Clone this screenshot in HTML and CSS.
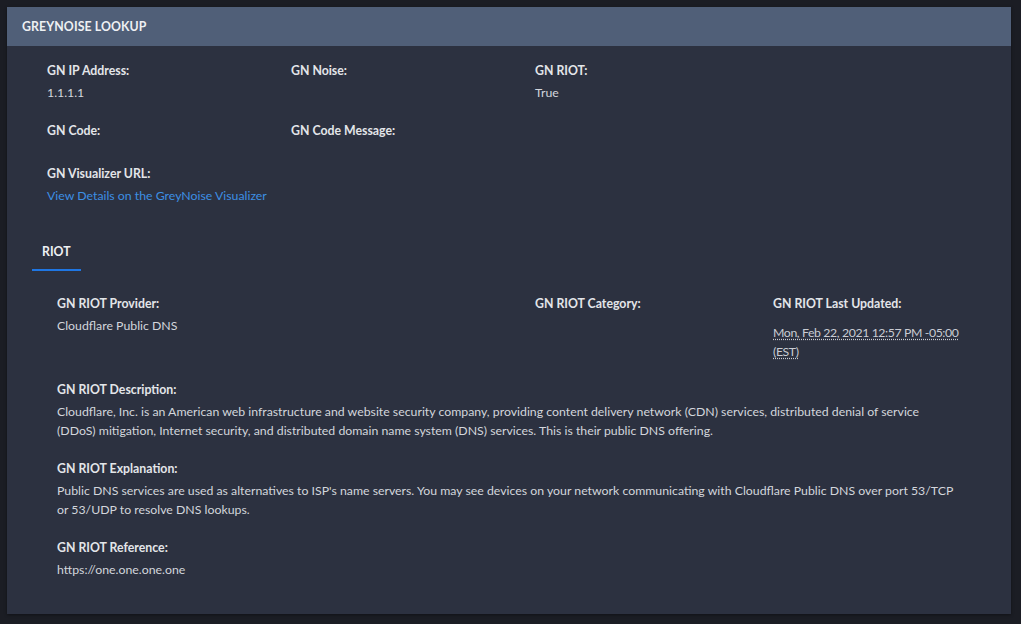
FILE: index.html
```html
<!DOCTYPE html>
<html>
<head>
<meta charset="utf-8">
<link rel="stylesheet" href="styles.css">
</head>
<body>
<div class="panel">
  <div class="panel-header">GREYNOISE LOOKUP</div>
  <div class="panel-body">
    <div class="grid top">
      <div class="field"><div class="label">GN IP Address:</div><div class="value">1.1.1.1</div></div>
      <div class="field"><div class="label">GN Noise:</div><div class="value"></div></div>
      <div class="field"><div class="label">GN RIOT:</div><div class="value">True</div></div>
      <div class="field"><div class="label">GN Code:</div><div class="value empty"></div></div>
      <div class="field"><div class="label">GN Code Message:</div><div class="value empty"></div></div>
      <div class="field"></div>
      <div class="field wide"><div class="label">GN Visualizer URL:</div><div class="value"><a class="link" href="#">View Details on the GreyNoise Visualizer</a></div></div>
    </div>
    <div class="tabs"><div class="tab active">RIOT</div></div>
    <div class="riot">
      <div class="grid riot-grid">
        <div class="field"><div class="label">GN RIOT Provider:</div><div class="value">Cloudflare Public DNS</div></div>
        <div class="field"><div class="label">GN RIOT Category:</div><div class="value"></div></div>
        <div class="field"><div class="label">GN RIOT Last Updated:</div><div class="value date"><span class="dotted">Mon, Feb 22, 2021 12:57 PM -05:00 (EST)</span></div></div>
      </div>
      <div class="field"><div class="label">GN RIOT Description:</div><div class="value">Cloudflare, Inc. is an American web infrastructure and website security company, providing content delivery network (CDN) services, distributed denial of service (DDoS) mitigation, Internet security, and distributed domain name system (DNS) services. This is their public DNS offering.</div></div>
      <div class="field"><div class="label">GN RIOT Explanation:</div><div class="value">Public DNS services are used as alternatives to ISP's name servers. You may see devices on your network communicating with Cloudflare Public DNS over port 53/TCP or 53/UDP to resolve DNS lookups.</div></div>
      <div class="field"><div class="label">GN RIOT Reference:</div><div class="value">https://one.one.one.one</div></div>
    </div>
  </div>
</div>
</body>
</html>
```
FILE: styles.css
```css
html, body {
  margin: 0;
  padding: 0;
  background: #1b1d24;
}
body {
  padding: 7px 10px 11px 7px;
  font-family: Lato, "Liberation Sans", sans-serif;
  font-size: 12.3px;
  color: #d3d6dc;
}
.panel {
  background: #2c3140;
  box-shadow: 0 1px 3px rgba(0,0,0,0.4);
}
.panel-header {
  background: #505f78;
  height: 39px;
  line-height: 39px;
  padding-left: 15px;
  font-weight: 700;
  color: #eef0f3;
  font-size: 12.3px;
  letter-spacing: 0.1px;
}
.panel-body {
  padding: 15px 55px 16px 40px;
}
.grid {
  display: grid;
}
.top {
  grid-template-columns: 244px 244px 244px;
}
.wide {
  grid-column: 1 / span 3;
}
.field {
  margin-bottom: 19px;
}
.label {
  font-weight: 700;
  color: #e3e5e9;
  line-height: 19px;
  margin-bottom: 3px;
}
.value {
  line-height: 19px;
  color: #d3d6dc;
}
.value:empty {
  min-height: 2px;
}
.link {
  color: #3d8fe3;
  text-decoration: none;
}
.tabs {
  display: flex;
  margin-left: -15px;
  margin-top: 11px;
}
.tab {
  padding: 0 10px;
  line-height: 19px;
  padding-top: 7px;
  padding-bottom: 8px;
  font-weight: 700;
  color: #eef0f3;
}
.tab.active {
  border-bottom: 2px solid #1f76e3;
}
.riot {
  padding: 23px 0 0 10px;
}
.riot-grid {
  grid-template-columns: 478px 238px 1fr;
}
.date {
  padding-top: 7px;
  margin-right: -16px;
}
.dotted {
  text-decoration: underline dotted;
  text-underline-offset: 2px;
  color: #c9ccd3;
  letter-spacing: -0.4px;
}
```
